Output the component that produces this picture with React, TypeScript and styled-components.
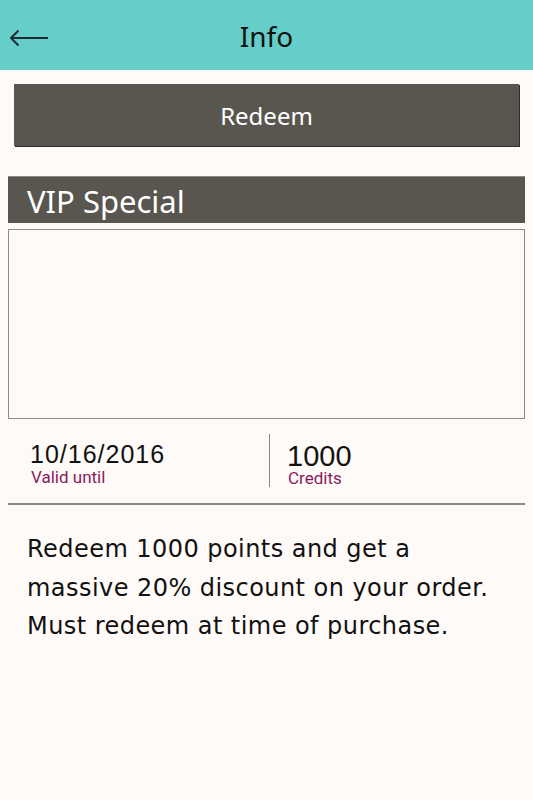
import React from "react"
import styled, { createGlobalStyle } from "styled-components"

const GlobalStyle = createGlobalStyle`
  html, body {
    margin: 0;
    padding: 0;
    background: #fdfaf7;
  }
  body {
    font-family: "Liberation Sans", Arial, sans-serif;
    color: #111;
  }
`

const Page = styled.div`
  width: 533px;
  min-height: 800px;
  background: #fdfaf7;
`

const Header = styled.header`
  height: 70px;
  background: #66cec9;
  display: grid;
  grid-template-columns: 70px 1fr 70px;
  align-items: center;
`

const BackButton = styled.button`
  border: 0;
  background: none;
  padding: 0 0 0 10px;
  margin-top: 5px;
  display: flex;
  align-items: center;
  cursor: pointer;
`

const Title = styled.h1`
  margin: 2px 0 0;
  text-align: center;
  font-family: "Noto Sans", "Open Sans", sans-serif;
  font-weight: 400;
  font-size: 28px;
  color: #111;
  line-height: 1;
`

const Content = styled.main`
  padding: 14px 8px 0;
  display: flex;
  flex-direction: column;
`

const RedeemButton = styled.button`
  margin: 0 6px;
  height: 62px;
  border: 0;
  background: #59564f;
  color: #fff;
  font-family: "Noto Sans", "Open Sans", sans-serif;
  font-size: 24px;
  box-shadow: 1px 1px 0 #2f2d29;
  cursor: pointer;
`

const SectionBar = styled.h2`
  margin: 30px 0 0;
  height: 47px;
  background: #59564f;
  color: #fff;
  font-family: "Noto Sans", "Open Sans", sans-serif;
  font-weight: 400;
  font-size: 31px;
  line-height: 49px;
  padding-left: 19px;
  border-top: 1px solid #8a8882;
  box-sizing: border-box;
`

const ImageBox = styled.div`
  margin-top: 6px;
  height: 190px;
  border: 1px solid #8a8a8a;
  box-sizing: border-box;
`

const InfoRow = styled.div`
  display: grid;
  grid-template-columns: 261px 1fr;
  padding: 15px 0 16px;
  border-bottom: 2px solid #8a8a8a;
`

const InfoCell = styled.div<{ $divider?: boolean }>`
  display: flex;
  flex-direction: column;
  box-sizing: border-box;
  height: 53px;
  padding-top: 6px;
  padding-left: ${(p) => (p.$divider ? "17px" : "22px")};
  border-left: ${(p) => (p.$divider ? "1px solid #8a8a8a" : "none")};
`

const Value = styled.div<{ $big?: boolean }>`
  font-size: ${(p) => (p.$big ? "29px" : "25px")};
  line-height: ${(p) => (p.$big ? "25px" : "28px")};
  letter-spacing: ${(p) => (p.$big ? "0" : "1px")};
  margin-top: ${(p) => (p.$big ? "4px" : "0")};
  color: #111;
  white-space: nowrap;
`

const Label = styled.div`
  font-family: Roboto, "Liberation Sans", sans-serif;
  font-size: 17px;
  line-height: 18px;
  color: #8a1a5c;
  padding-left: 1px;
`

const Description = styled.p`
  margin: 0;
  padding: 25px 19px 0;
  font-family: "DejaVu Sans", Verdana, sans-serif;
  font-size: 24px;
  letter-spacing: 0.45px;
  line-height: 38.5px;
  color: #111;
  white-space: nowrap;
`

function BackArrow() {
  return (
    <svg width="40" height="18" viewBox="0 0 40 18">
      <path
        d="M1 9 H38 M8.5 1.5 L1 9 L8.5 16.5"
        stroke="#1c2f2e"
        strokeWidth="2"
        fill="none"
      />
    </svg>
  )
}

export default function App() {
  return (
    <Page>
      <GlobalStyle />
      <Header>
        <BackButton aria-label="Back">
          <BackArrow />
        </BackButton>
        <Title>Info</Title>
        <span />
      </Header>
      <Content>
        <RedeemButton>Redeem</RedeemButton>
        <SectionBar>VIP Special</SectionBar>
        <ImageBox />
        <InfoRow>
          <InfoCell>
            <Value>10/16/2016</Value>
            <Label>Valid until</Label>
          </InfoCell>
          <InfoCell $divider>
            <Value $big>1000</Value>
            <Label>Credits</Label>
          </InfoCell>
        </InfoRow>
        <Description>
          Redeem 1000 points and get a
          <br />
          massive 20% discount on your order.
          <br />
          Must redeem at time of purchase.
        </Description>
      </Content>
    </Page>
  )
}
